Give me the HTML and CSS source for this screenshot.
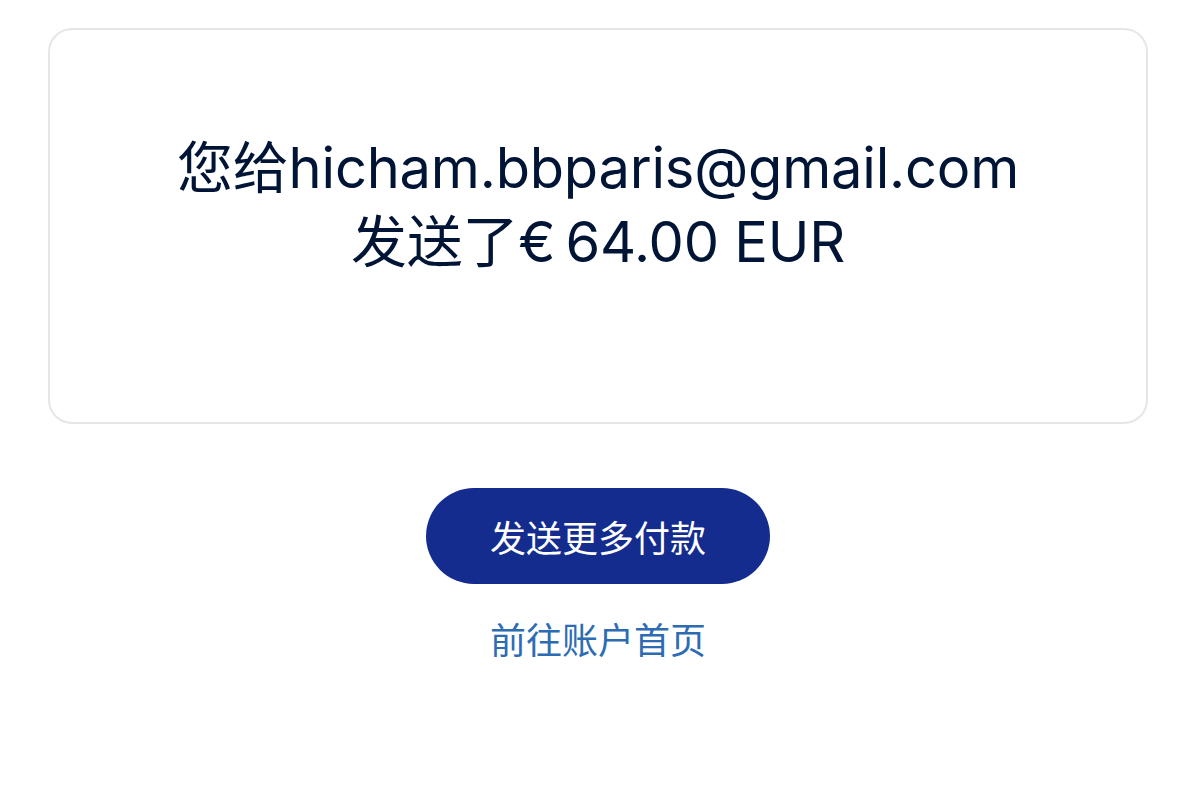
FILE: index.html
```html
<!DOCTYPE html>
<html lang="zh-CN">
<head>
  <meta charset="UTF-8" />
  <meta name="viewport" content="width=device-width, initial-scale=1.0"/>
  <title>付款已发送</title>
  <link rel="stylesheet" href="styles.css">
</head>
<body>
  <div class="page">
    <div class="card">
      <h1 class="message">您给hicham.bbparis@gmail.com<br>发送了€&#8239;64.00 EUR</h1>
    </div>

    <div class="actions">
      <button class="btn-primary" type="button">发送更多付款</button>
      <a class="link" href="#">前往账户首页</a>
    </div>
  </div>
</body>
</html>
```

FILE: styles.css
```css
* {
  box-sizing: border-box;
}
body {
  font-family: Inter, 'Noto Sans CJK SC', sans-serif;
  margin: 0;
  background: #ffffff;
  color: #001435;
}
.page {
  padding: 28px 52px 0 48px;
}
.card {
  border: 2px solid #e6e6e6;
  border-radius: 24px;
  padding: 101px 20px 143px;
  text-align: center;
}
.message {
  margin: 0;
  font-size: 56px;
  font-weight: 400;
  line-height: 74px;
  letter-spacing: -0.2px;
  color: #001435;
}
.actions {
  display: flex;
  flex-direction: column;
  align-items: center;
  margin-top: 64px;
}
.btn-primary {
  width: 344px;
  height: 96px;
  border: none;
  border-radius: 48px;
  background: #142c8e;
  color: #ffffff;
  font-family: inherit;
  font-size: 36px;
}
.link {
  margin-top: 28px;
  font-size: 36px;
  color: #2d6cb2;
  text-decoration: none;
}
```
